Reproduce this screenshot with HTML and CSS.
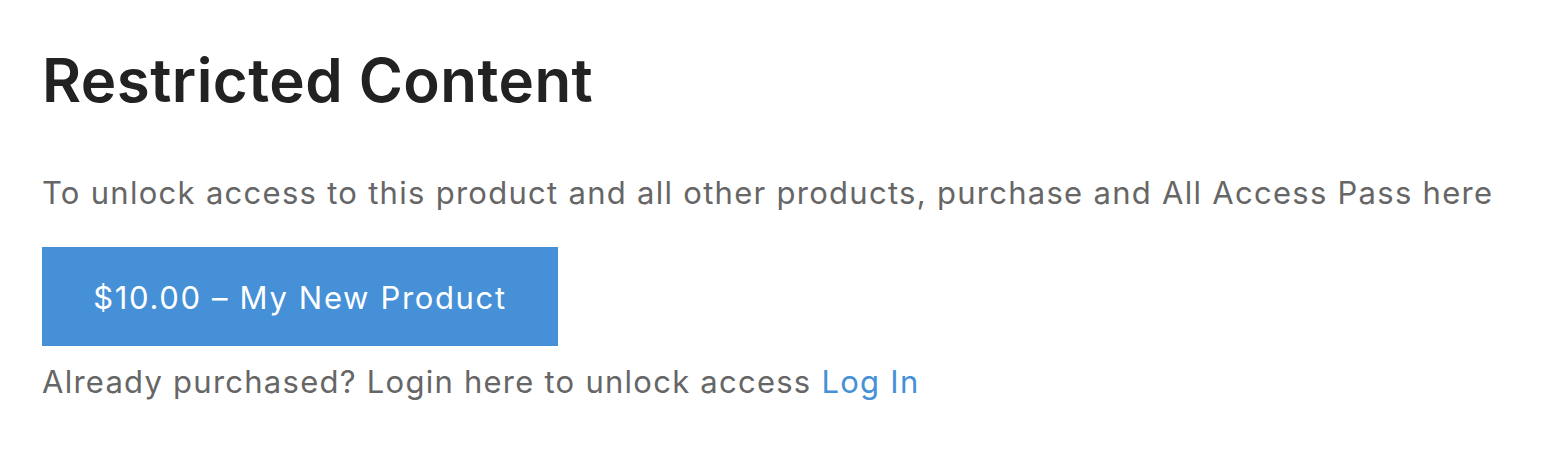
FILE: index.html
```html
<!DOCTYPE html>
<html>
<head>
<meta charset="utf-8">
<link rel="stylesheet" href="styles.css">
</head>
<body>
<main class="restricted">
  <h1 class="title">Restricted Content</h1>
  <p class="intro">To unlock access to this product and all other products, purchase and All Access Pass here</p>
  <a class="buy-btn" href="#">$10.00 – My New Product</a>
  <p class="login">Already purchased? Login here to unlock access <a class="login-link" href="#">Log In</a></p>
</main>
</body>
</html>
```

FILE: styles.css
```css
html, body {
  margin: 0;
  padding: 0;
  background: #fff;
}
body {
  font-family: Inter, "Noto Sans", "Liberation Sans", sans-serif;
}
.restricted {
  padding: 40px 42px 0 42px;
  display: flex;
  flex-direction: column;
  align-items: flex-start;
}
.title {
  margin: 0;
  font-size: 60px;
  font-weight: 600;
  color: #222;
  line-height: 80px;
  letter-spacing: 0.45px;
}
.intro {
  margin: 51px 0 0 0;
  font-size: 31px;
  line-height: 44px;
  color: #666;
  letter-spacing: 1.28px;
}
.buy-btn {
  margin-top: 32px;
  display: block;
  box-sizing: border-box;
  width: 516px;
  height: 99px;
  padding-top: 2px;
  line-height: 97px;
  text-align: center;
  background: #4590d7;
  color: #fff;
  font-size: 31px;
  letter-spacing: 1.65px;
  text-decoration: none;
}
.login {
  margin: 14px 0 0 0;
  font-size: 31px;
  line-height: 44px;
  color: #666;
  letter-spacing: 1.25px;
}
.login-link {
  color: #4590d7;
  text-decoration: none;
}
```
